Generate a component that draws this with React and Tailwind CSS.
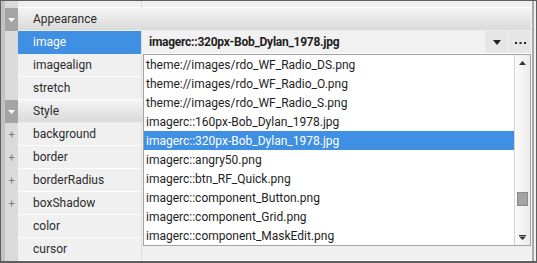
import React from "react";

const rows = [
  { type: "cat", label: "Appearance" },
  { type: "prop", label: "image", selected: true },
  { type: "prop", label: "imagealign" },
  { type: "prop", label: "stretch" },
  { type: "cat", label: "Style" },
  { type: "prop", label: "background", plus: true },
  { type: "prop", label: "border", plus: true },
  { type: "prop", label: "borderRadius", plus: true },
  { type: "prop", label: "boxShadow", plus: true },
  { type: "prop", label: "color" },
  { type: "prop", label: "cursor" },
];

const items = [
  "theme://images/rdo_WF_Radio_DS.png",
  "theme://images/rdo_WF_Radio_O.png",
  "theme://images/rdo_WF_Radio_S.png",
  "imagerc::160px-Bob_Dylan_1978.jpg",
  "imagerc::320px-Bob_Dylan_1978.jpg",
  "imagerc::angry50.png",
  "imagerc::btn_RF_Quick.png",
  "imagerc::component_Button.png",
  "imagerc::component_Grid.png",
  "imagerc::component_MaskEdit.png",
];

function Gutter({ cat, plus, h }) {
  return (
    <div className={`flex shrink-0 ${h}`}>
      <div className="w-[4px] bg-[#c2c2c2]" />
      <div
        className={`w-[13px] flex items-center justify-center ${
          cat ? "bg-[#a4a4a4]" : "bg-[#dadada]"
        }`}
      >
        {cat && (
          <svg width="7" height="4" viewBox="0 0 7 4">
            <path d="M0 0H7L3.5 4Z" fill="#ffffff" />
          </svg>
        )}
        {plus && (
          <span className="text-[11px] leading-none text-[#7a7a7a] -mt-[1px]">+</span>
        )}
      </div>
    </div>
  );
}

function Row({ r }) {
  if (r.type === "cat") {
    return (
      <div className="flex h-[23px]">
        <Gutter cat h="h-[23px]" />
        <div className="flex-1 flex items-center pl-[15px] bg-gradient-to-b from-[#f4f4f4] to-[#dadada] border-b border-[#ececec] text-[#2b2b2b]">
          {r.label}
        </div>
      </div>
    );
  }
  return (
    <div className="flex h-[23px]">
      <Gutter plus={r.plus} h="h-[23px]" />
      <div
        className={`w-[123px] shrink-0 flex items-center pl-[15px] border-b ${
          r.selected
            ? "bg-[#3f8fe2] text-white border-[#3f8fe2]"
            : "bg-[#f0f0f0] text-[#2b2b2b] border-[#fdfdfd]"
        }`}
      >
        {r.label}
      </div>
      <div className="w-[1px] bg-[#dedede]" />
      {r.selected ? (
        <div className="flex-1 flex bg-[#f1f1f1] border-b border-[#fdfdfd]">
          <div className="flex-1 flex items-center pl-[7px] font-bold tracking-[-0.25px] text-[#1e1e1e]">
            imagerc::320px-Bob_Dylan_1978.jpg
          </div>
          <div className="w-[23px] bg-[#e6e6e6] flex items-center justify-center">
            <svg width="8" height="5" viewBox="0 0 8 5">
              <path d="M0 0H8L4 5Z" fill="#222" />
            </svg>
          </div>
          <div className="w-[1px]" />
          <div className="w-[22px] bg-[#e6e6e6] flex items-center justify-center pt-[2px]">
            <svg width="11" height="3" viewBox="0 0 11 3">
              <rect x="0" y="0" width="2" height="2" fill="#222" />
              <rect x="4.5" y="0" width="2" height="2" fill="#222" />
              <rect x="9" y="0" width="2" height="2" fill="#222" />
            </svg>
          </div>
        </div>
      ) : (
        <div className="flex-1 bg-[#f0f0f0] border-b border-[#fdfdfd]" />
      )}
    </div>
  );
}

export default function App() {
  return (
    <div className="w-[537px] h-[263px] bg-[#f0f0f0] border-l border-t border-r border-b-2 border-[#5e5e5e] flex overflow-hidden relative font-['Roboto',sans-serif] text-[12px]">
      <div className="flex-1 flex flex-col">
        {/* partial top row */}
        <div className="flex h-[7px]">
          <Gutter h="h-[7px]" />
          <div className="w-[123px] bg-[#f0f0f0] border-b border-[#fdfdfd]" />
          <div className="w-[1px] bg-[#dedede]" />
          <div className="flex-1 bg-[#f0f0f0] border-b border-[#fdfdfd]" />
        </div>
        {rows.map((r, i) => (
          <Row key={i} r={r} />
        ))}
        <div className="flex flex-1">
          <Gutter h="h-full" />
          <div className="flex-1" />
        </div>
      </div>
      <div className="w-[5px] flex">
        <div className="w-[1px] bg-[#f4f4f4]" />
        <div className="w-[2px] bg-[#a8a8a8]" />
        <div className="w-[2px] bg-[#efefef]" />
      </div>

      {/* dropdown list */}
      <div className="absolute left-[142px] top-[53px] w-[388px] h-[192px] bg-white border border-[#a3a3a3] flex text-[#1e1e1e]">
        <div className="flex-1 flex flex-col">
          {items.map((t, i) => (
            <div
              key={i}
              className={`h-[19px] flex items-center pl-[2px] ${
                i === 4 ? "bg-[#3f8fe2] text-white" : ""
              }`}
            >
              {t}
            </div>
          ))}
        </div>
        <div className="w-[16px] border-l border-[#d6d6d6] bg-gradient-to-r from-[#fbfbfb] to-[#ececec] flex flex-col items-center">
          <div className="h-[16px] flex items-center justify-center">
            <svg width="7" height="4" viewBox="0 0 7 4">
              <path d="M0 4H7L3.5 0Z" fill="#333" />
            </svg>
          </div>
          <div className="flex-1 relative w-full">
            <div className="absolute left-[2px] top-[121px] w-[11px] h-[14px] bg-[#a4a4a4] border border-[#8a8a8a]" />
          </div>
          <div className="h-[16px] flex items-center justify-center">
            <svg width="7" height="5" viewBox="0 0 7 5">
              <rect x="0" y="0" width="7" height="1" fill="#333" />
              <path d="M0 1.5H7L3.5 5Z" fill="#333" />
            </svg>
          </div>
        </div>
      </div>
    </div>
  );
}
